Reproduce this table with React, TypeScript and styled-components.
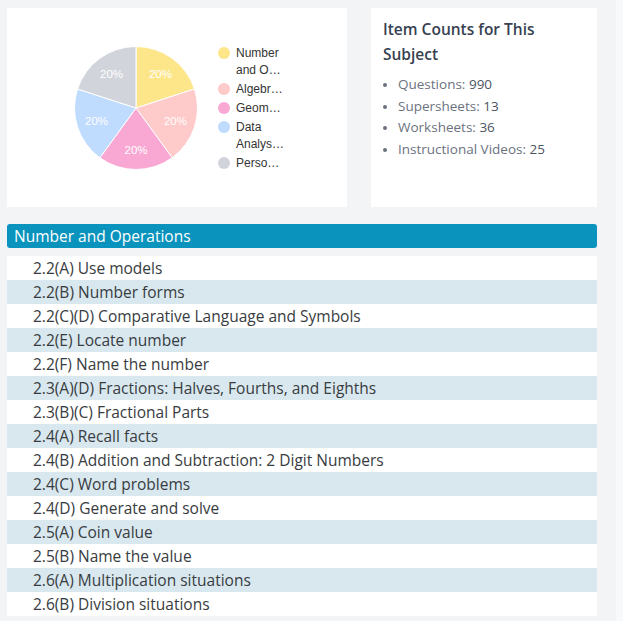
import React from "react";
import styled, { createGlobalStyle } from "styled-components";

const GlobalStyle = createGlobalStyle`
  html, body {
    margin: 0;
    padding: 0;
    background: #f3f4f6;
  }
  body {
    font-family: "Open Sans", "Noto Sans", sans-serif;
  }
`;

type Slice = { label: string[]; color: string };

const slices: Slice[] = [
  { label: ["Number", "and O…"], color: "#fde68a" },
  { label: ["Algebr…"], color: "#fecaca" },
  { label: ["Geom…"], color: "#f9a8d4" },
  { label: ["Data", "Analys…"], color: "#bfdbfe" },
  { label: ["Perso…"], color: "#d1d5db" },
];

const counts = [
  { name: "Questions", value: 990 },
  { name: "Supersheets", value: 13 },
  { name: "Worksheets", value: 36 },
  { name: "Instructional Videos", value: 25 },
];

const standards = [
  "2.2(A) Use models",
  "2.2(B) Number forms",
  "2.2(C)(D) Comparative Language and Symbols",
  "2.2(E) Locate number",
  "2.2(F) Name the number",
  "2.3(A)(D) Fractions: Halves, Fourths, and Eighths",
  "2.3(B)(C) Fractional Parts",
  "2.4(A) Recall facts",
  "2.4(B) Addition and Subtraction: 2 Digit Numbers",
  "2.4(C) Word problems",
  "2.4(D) Generate and solve",
  "2.5(A) Coin value",
  "2.5(B) Name the value",
  "2.6(A) Multiplication situations",
  "2.6(B) Division situations",
];

const Page = styled.div`
  min-height: 621px;
  box-sizing: border-box;
  padding: 8px 19px 0 7px;
  border-right: 7px solid #f8f9fa;
`;

const TopRow = styled.div`
  display: grid;
  grid-template-columns: 340px 226px;
  column-gap: 24px;
`;

const Card = styled.div`
  background: #ffffff;
  height: 199px;
  box-sizing: border-box;
`;

const ChartCard = styled(Card)`
  display: flex;
  align-items: flex-start;
  padding: 30px 0 0 67px;
`;

const Legend = styled.ul`
  list-style: none;
  margin: 7px 0 0 20px;
  padding: 0;
  display: flex;
  flex-direction: column;
  font-family: "Liberation Sans", Arial, sans-serif;
  font-size: 12px;
  line-height: 17px;
  color: #333333;
`;

const LegendItem = styled.li`
  display: flex;
  align-items: flex-start;
  gap: 6px;
  margin-bottom: 2px;
`;

const Dot = styled.span<{ $color: string }>`
  width: 12px;
  height: 12px;
  margin-top: 2px;
  border-radius: 50%;
  background: ${(p) => p.$color};
  flex: none;
`;

const CountsCard = styled(Card)`
  padding: 9px 12px 0 12px;
  color: #374151;
`;

const Title = styled.h3`
  margin: 0 0 7px;
  font-size: 15.5px;
  font-weight: 600;
  line-height: 25px;
  color: #374151;
`;

const CountList = styled.ul`
  margin: 0;
  padding-left: 15px;
  font-size: 13.5px;
  line-height: 21.7px;
  color: #6b7280;
  li::marker {
    color: #6b7280;
    font-size: 12px;
  }
`;

const Value = styled.span`
  color: #4b5563;
`;

const SectionHeader = styled.div`
  margin-top: 17px;
  height: 24px;
  background: #0993bd;
  border-radius: 3px;
  color: #ffffff;
  font-size: 15.5px;
  line-height: 24px;
  padding-left: 7px;
`;

const Rows = styled.div`
  margin-top: 8px;
  display: flex;
  flex-direction: column;
`;

const Row = styled.div<{ $alt: boolean }>`
  height: 24px;
  line-height: 24px;
  padding-left: 26px;
  background: ${(p) => (p.$alt ? "#d9e8ef" : "#ffffff")};
  color: #383c41;
  font-size: 15.5px;
`;

function PieChart() {
  const cx = 62;
  const cy = 70;
  const r = 61.5;
  const step = (Math.PI * 2) / slices.length;
  const pt = (a: number, rad: number) => [
    cx + rad * Math.sin(a),
    cy - rad * Math.cos(a),
  ];
  return (
    <svg width="124" height="140" viewBox="0 0 124 140">
      {slices.map((s, i) => {
        const [x1, y1] = pt(i * step, r);
        const [x2, y2] = pt((i + 1) * step, r);
        return (
          <path
            key={s.color}
            d={`M${cx} ${cy} L${x1} ${y1} A${r} ${r} 0 0 1 ${x2} ${y2} Z`}
            fill={s.color}
            stroke="#ffffff"
            strokeWidth="1"
          />
        );
      })}
      {slices.map((s, i) => {
        const [x, y] = pt((i + 0.5) * step, 41.5);
        return (
          <text
            key={s.color + "t"}
            x={x}
            y={y + 4}
            textAnchor="middle"
            fill="#ffffff"
            fontSize="11.5"
            fontFamily="Liberation Sans, Arial, sans-serif"
          >
            20%
          </text>
        );
      })}
    </svg>
  );
}

export default function App() {
  return (
    <>
      <GlobalStyle />
      <Page>
        <TopRow>
          <ChartCard>
            <PieChart />
            <Legend>
              {slices.map((s) => (
                <LegendItem key={s.color}>
                  <Dot $color={s.color} />
                  <span>
                    {s.label.map((l, j) => (
                      <div key={j}>{l}</div>
                    ))}
                  </span>
                </LegendItem>
              ))}
            </Legend>
          </ChartCard>
          <CountsCard>
            <Title>
              Item Counts for This
              <br />
              Subject
            </Title>
            <CountList>
              {counts.map((c) => (
                <li key={c.name}>
                  {c.name}: <Value>{c.value}</Value>
                </li>
              ))}
            </CountList>
          </CountsCard>
        </TopRow>
        <SectionHeader>Number and Operations</SectionHeader>
        <Rows>
          {standards.map((s, i) => (
            <Row key={s} $alt={i % 2 === 1}>
              {s}
            </Row>
          ))}
        </Rows>
      </Page>
    </>
  );
}
